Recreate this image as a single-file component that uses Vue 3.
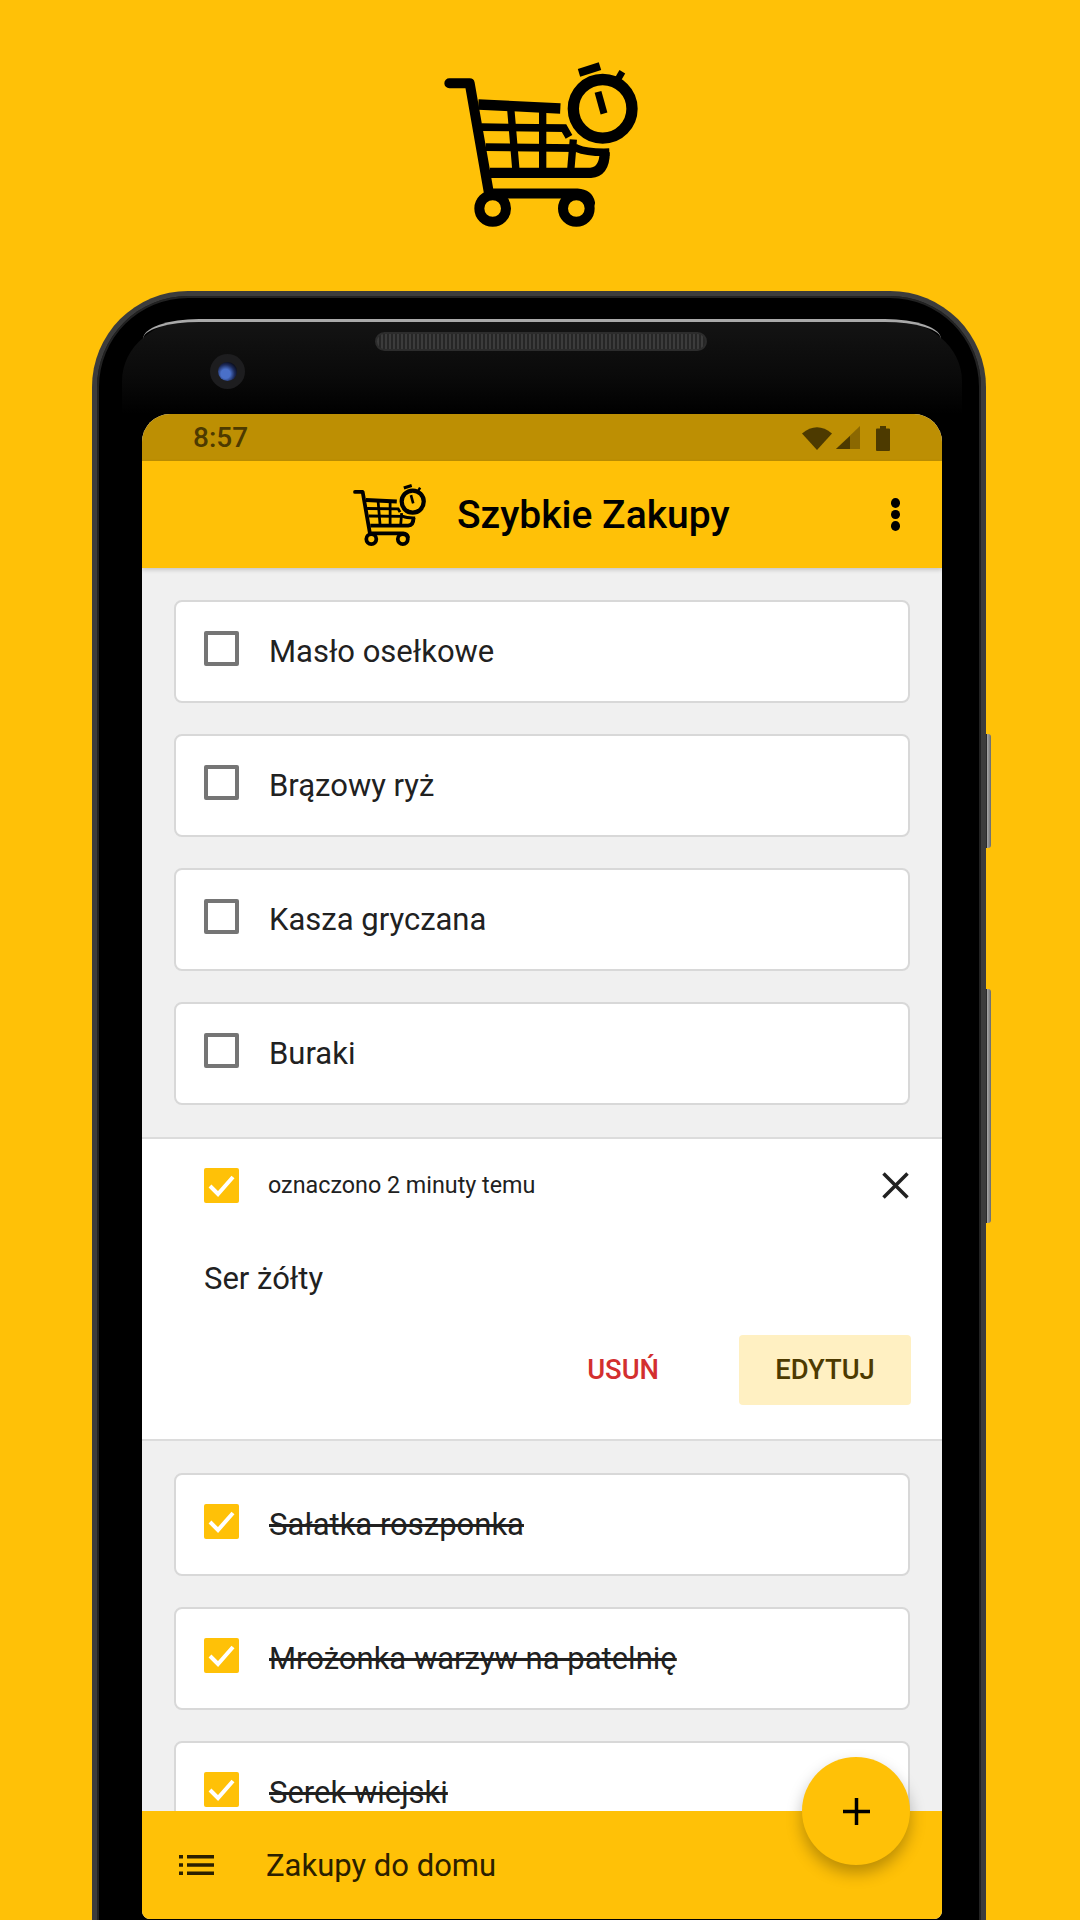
<script setup>
const topItems = ['Masło osełkowe', 'Brązowy ryż', 'Kasza gryczana', 'Buraki']
const doneItems = ['Sałatka roszponka', 'Mrożonka warzyw na patelnię', 'Serek wiejski']
</script>

<template>
  <div class="page">
    <svg width="0" height="0" class="defs">
      <symbol id="logo" viewBox="130 68 582 494">
        <g fill="none" stroke="#000">
          <path d="M146 131H207L265 462H530Q562 464 568 490" stroke-width="30" stroke-linecap="round" stroke-linejoin="round" />
          <circle cx="276" cy="507" r="40" stroke-width="30" />
          <circle cx="527" cy="507" r="40" stroke-width="30" />
          <path d="M233 195L479 207" stroke-width="31" />
          <path d="M242 263L490 266L505 292" stroke-width="23" />
          <path d="M255 323L528 326Q560 340 626 338" stroke-width="23" />
          <path d="M268 400H570Q612 396 612 338" stroke-width="31" />
          <path d="M330 205L346 395M426 210V395M518 300L510 395" stroke-width="22" />
          <circle cx="606" cy="208" r="88" stroke-width="34" />
          <path d="M592 157L610 222" stroke-width="21" />
          <path d="M535 100L598 80" stroke-width="24" />
          <path d="M650 122L665 97" stroke-width="20" />
        </g>
      </symbol>
    </svg>

    <header class="hero">
      <svg class="hero-logo"><use href="#logo" /></svg>
    </header>

    <div class="phone">
      <span class="side-btn power"></span>
      <span class="side-btn volume"></span>
      <div class="bezel">
        <span class="highlight"></span>
        <span class="speaker"></span>
        <span class="camera"><span class="lens"></span></span>
      </div>

      <div class="screen">
        <div class="status">
          <span class="time">8:57</span>
          <div class="status-icons">
            <svg width="30" height="24" viewBox="0 0 30 24">
              <path d="M0 7.5Q15 -5 30 7.5L15 24Z" fill="#4d3a00" />
            </svg>
            <svg width="24" height="23" viewBox="0 0 24 23">
              <path d="M24 0V23H0Z" fill="#4d3a00" opacity=".45" />
              <path d="M14 10V23H0Z" fill="#4d3a00" />
            </svg>
            <svg class="battery" width="14" height="26" viewBox="0 0 14 26">
              <path d="M1 3.500H4V1H10V3.500H13A1 1 0 0 1 14 4.500V25A1 1 0 0 1 13 26H1A1 1 0 0 1 0 25V4.500A1 1 0 0 1 1 3.500Z" fill="#4d3a00" />
            </svg>
          </div>
        </div>

        <div class="appbar">
          <svg class="app-logo"><use href="#logo" /></svg>
          <h1 class="title">Szybkie Zakupy</h1>
          <span class="dots"><i></i><i></i><i></i></span>
        </div>

        <main class="content">
          <div class="card" v-for="item in topItems" :key="item">
            <span class="box"></span>
            <span class="label">{{ item }}</span>
          </div>

          <section class="panel">
            <div class="panel-head">
              <span class="box checked">
                <svg width="35" height="35" viewBox="0 0 35 35"><path d="M6 18L14 26L29 9" fill="none" stroke="#fff" stroke-width="4" /></svg>
              </span>
              <span class="meta">oznaczono 2 minuty temu</span>
              <svg class="close" width="27" height="27" viewBox="0 0 27 27">
                <path d="M1.500 1.500L25.500 25.500M25.500 1.500L1.500 25.500" stroke="#212121" stroke-width="3.500" fill="none" />
              </svg>
            </div>
            <div class="panel-name">Ser żółty</div>
            <div class="panel-actions">
              <span class="btn-delete">USUŃ</span>
              <span class="btn-edit">EDYTUJ</span>
            </div>
          </section>

          <div class="card" v-for="item in doneItems" :key="item">
            <span class="box checked">
              <svg width="35" height="35" viewBox="0 0 35 35"><path d="M6 18L14 26L29 9" fill="none" stroke="#fff" stroke-width="4" /></svg>
            </span>
            <span class="label done">{{ item }}</span>
          </div>
        </main>

        <footer class="bottom">
          <svg width="35" height="20" viewBox="0 0 35 20" class="list-icon">
            <path d="M0 0H4V3.500H0ZM8 0H35V3.500H8ZM0 8.250H4V11.750H0ZM8 8.250H35V11.750H8ZM0 16.500H4V20H0ZM8 16.500H35V20H8Z" fill="#2b2000" />
          </svg>
          <span class="bottom-label">Zakupy do domu</span>
        </footer>

        <button class="fab" aria-label="Dodaj">
          <svg width="27" height="27" viewBox="0 0 27 27"><path d="M13.500 0V27M0 13.500H27" stroke="#000" stroke-width="3.500" fill="none" /></svg>
        </button>
      </div>
    </div>
  </div>
</template>

<style>
html, body { margin: 0; background: #ffc107; }
</style>

<style scoped>
.page {
  width: 1080px;
  height: 1920px;
  overflow: hidden;
  background: #ffc107;
  font-family: Roboto, "Liberation Sans", sans-serif;
  color: #212121;
}
.defs { position: absolute; }
.hero {
  height: 291px;
  box-sizing: border-box;
  padding: 62px 0 0 444px;
}
.hero-logo { display: block; width: 194px; height: 165px; }

.phone {
  position: relative;
  box-sizing: border-box;
  width: 894px;
  height: 1640px;
  margin-left: 92px;
  padding-left: 45px;
  background: #000;
  border: 5px solid #3c3c3c;
  border-bottom: 0;
  border-radius: 96px 96px 0 0;
  box-shadow: inset 0 0 0 2px #222;
}
.side-btn {
  position: absolute;
  left: 889px;
  width: 5px;
  background: linear-gradient(90deg, #2b2b2b 0 1px, #a8a8a8 1px, #6a6a6a);
  border-radius: 0 3px 3px 0;
}
.power { top: 438px; height: 114px; }
.volume { top: 693px; height: 234px; }

.bezel {
  position: relative;
  width: 840px;
  height: 95px;
  margin: 23px 0 0 -20px;
  border-radius: 74px 74px 0 0 / 62px 62px 0 0;
  background: linear-gradient(180deg, #141414 0, #0a0a0a 60%, #000 100%);
}
.highlight {
  position: absolute;
  left: 21px;
  right: 21px;
  top: 0;
  height: 20px;
  box-sizing: border-box;
  border-top: 3px solid #a9a9a9;
  border-radius: 56px 56px 0 0 / 20px 20px 0 0;
}
.speaker {
  position: absolute;
  left: 253px;
  top: 13px;
  width: 332px;
  height: 19px;
  box-sizing: border-box;
  border: 2px solid #2c2c2c;
  border-radius: 10px;
  background: repeating-linear-gradient(90deg, #3c3c3c 0 2px, #262626 2px 4px);
}
.camera {
  position: absolute;
  left: 88px;
  top: 35px;
  width: 35px;
  height: 35px;
  border-radius: 50%;
  background: #1d1d1f;
  display: flex;
  align-items: center;
  justify-content: center;
}
.lens {
  width: 19px;
  height: 19px;
  border-radius: 50%;
  background: radial-gradient(circle at 40% 62%, #4a70c8 0 28%, #1c2a5a 55%, #05060f 80%);
}

.screen {
  position: relative;
  height: 1505px;
  width: 800px;
  display: flex;
  flex-direction: column;
  overflow: hidden;
  background: #f0f0f0;
  border-radius: 28px 28px 8px 8px;
}
.status {
  flex: none;
  height: 47px;
  background: #bd8f03;
  display: flex;
  align-items: center;
  justify-content: space-between;
  padding: 0 52px 0 51px;
}
.time {
  font-size: 28px;
  font-weight: 500;
  color: #4d3a00;
}
.status-icons { display: flex; align-items: center; gap: 4px; }
.status-icons svg { display: block; }
.battery { margin-left: 12px; }

.appbar {
  position: relative;
  z-index: 2;
  flex: none;
  height: 107px;
  background: #ffc107;
  display: flex;
  align-items: center;
  padding-left: 211px;
  box-shadow: 0 2px 4px rgba(0, 0, 0, .18);
}
.app-logo { display: block; width: 73px; height: 62px; margin-right: 31px; }
.title {
  margin: 0;
  font-size: 39px;
  font-weight: 500;
  color: #000;
}
.dots {
  position: absolute;
  right: 42px;
  top: 37px;
  display: flex;
  flex-direction: column;
  gap: 2px;
}
.dots i { width: 9px; height: 9.500px; border-radius: 50%; background: #000; display: block; }

.content {
  flex: 1;
  min-height: 0;
  overflow: hidden;
  padding: 32px 0 0;
  display: flex;
  flex-direction: column;
  gap: 31px;
}
.card {
  flex: none;
  box-sizing: border-box;
  height: 103px;
  margin: 0 32px;
  background: #fff;
  border: 2px solid #d8d8d8;
  border-radius: 8px;
  display: flex;
  align-items: center;
  padding: 0 0 6px 28px;
}
.box {
  flex: none;
  box-sizing: border-box;
  width: 35px;
  height: 35px;
  border: 4px solid #757575;
  border-radius: 2px;
}
.box.checked {
  border: 0;
  background: #ffc107;
}
.box.checked svg { display: block; }
.label {
  margin-left: 30px;
  font-size: 31px;
  line-height: 38px;
  position: relative;
  top: 3px;
}
.done { text-decoration: line-through; }

.panel {
  flex: none;
  box-sizing: border-box;
  height: 304px;
  background: #fff;
  border-top: 2px solid #dcdcdc;
  border-bottom: 2px solid #dcdcdc;
  margin: 1px 0;
  padding: 28px 31px 0 62px;
}
.panel-head { display: flex; align-items: center; height: 36px; }
.meta {
  margin-left: 29px;
  font-size: 23.3px;
  flex: 1;
}
.close { display: block; margin-right: 2px; }
.panel-name {
  margin-top: 56px;
  font-size: 31px;
  line-height: 40px;
}
.panel-actions {
  margin-top: 36px;
  display: flex;
  align-items: center;
  justify-content: flex-end;
}
.btn-delete {
  font-size: 27.4px;
  font-weight: 500;
  color: #d32f2f;
  margin-right: 80px;
}
.btn-edit {
  box-sizing: border-box;
  width: 172px;
  height: 70px;
  border-radius: 4px;
  background: #fff0c2;
  color: #4d3a00;
  font-size: 27.4px;
  font-weight: 500;
  display: flex;
  align-items: center;
  justify-content: center;
}

.bottom {
  position: relative;
  z-index: 2;
  flex: none;
  height: 108px;
  background: #ffc107;
  display: flex;
  align-items: center;
  padding-left: 37px;
}
.list-icon { display: block; }
.bottom-label {
  margin-left: 52px;
  font-size: 31px;
  color: #2b2000;
}
.fab {
  position: absolute;
  z-index: 3;
  left: 660px;
  top: 1343px;
  width: 108px;
  height: 108px;
  padding: 0;
  border: 0;
  border-radius: 50%;
  background: #ffc107;
  box-shadow: 0 8px 16px rgba(0, 0, 0, .28);
  display: flex;
  align-items: center;
  justify-content: center;
}
.fab svg { display: block; }
</style>
